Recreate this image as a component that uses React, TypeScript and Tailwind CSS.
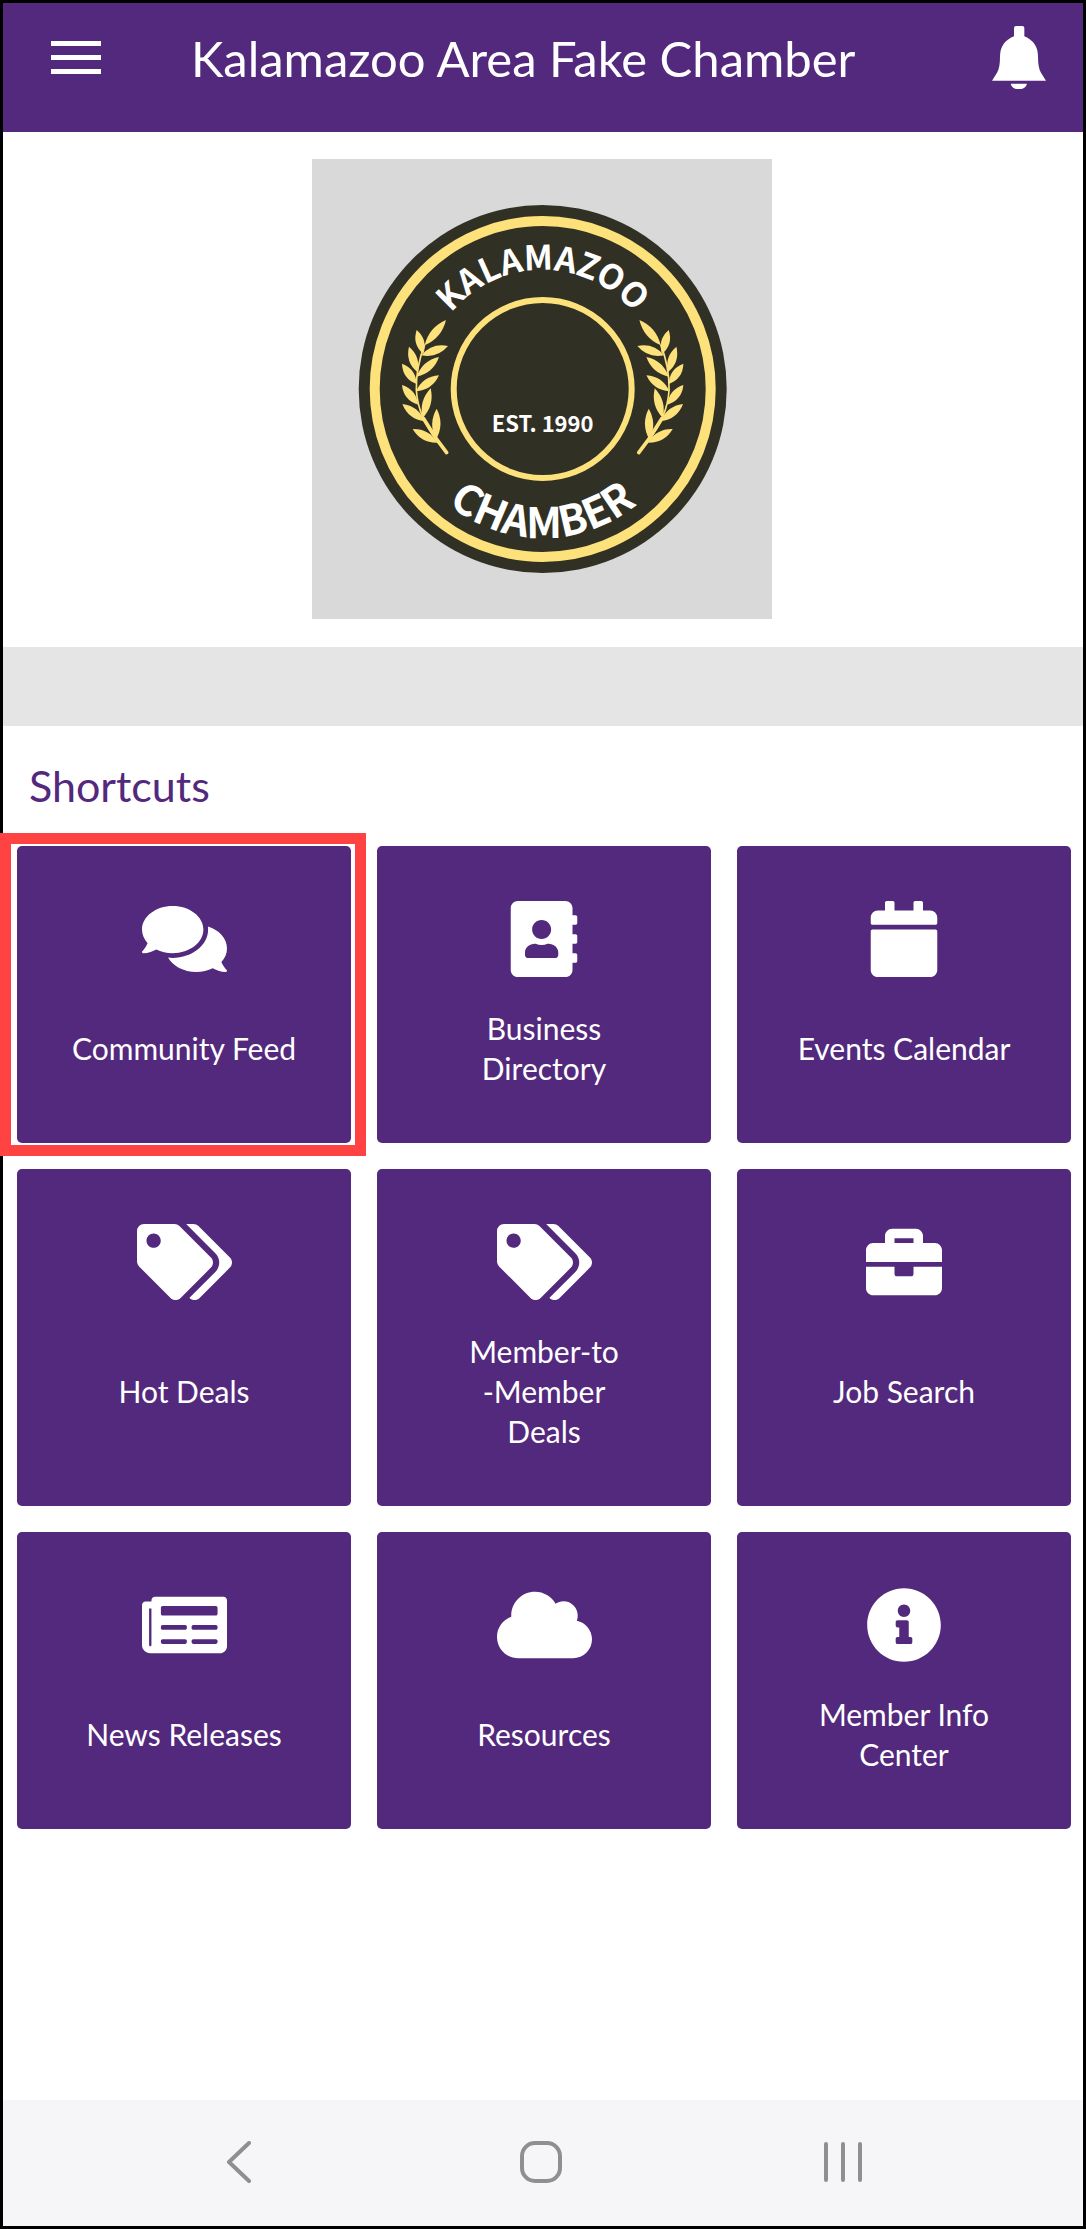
import {
  FaAddressBook,
  FaBriefcase,
  FaCalendar,
  FaCloud,
  FaComments,
  FaInfoCircle,
  FaNewspaper,
  FaTags,
} from "react-icons/fa";
import type { IconType } from "react-icons";

interface Shortcut {
  label: string;
  icon: IconType;
  iconWidth: string;
  highlighted?: boolean;
}

const shortcuts: Shortcut[] = [
  { label: "Community Feed", icon: FaComments, iconWidth: "w-[85px]", highlighted: true },
  { label: "Business\nDirectory", icon: FaAddressBook, iconWidth: "w-[76px]" },
  { label: "Events Calendar", icon: FaCalendar, iconWidth: "w-[76px]" },
  { label: "Hot Deals", icon: FaTags, iconWidth: "w-[95px]" },
  { label: "Member-to\n-Member\nDeals", icon: FaTags, iconWidth: "w-[95px]" },
  { label: "Job Search", icon: FaBriefcase, iconWidth: "w-[76px]" },
  { label: "News Releases", icon: FaNewspaper, iconWidth: "w-[85px]" },
  { label: "Resources", icon: FaCloud, iconWidth: "w-[95px]" },
  { label: "Member Info\nCenter", icon: FaInfoCircle, iconWidth: "w-[76px]" },
];

// [tipX, tipY, baseX, baseY] of every leaf on the laurel branch
const leaves = [
  [168, 30, 104, 106],
  [80, 60, 100, 132],
  [174, 108, 94, 136],
  [57, 110, 82, 186],
  [147, 141, 80, 200],
  [36, 161, 80, 222],
  [147, 196, 78, 244],
  [36, 225, 84, 284],
  [122, 235, 98, 324],
  [37, 282, 104, 334],
  [140, 296, 138, 388],
  [68, 357, 142, 398],
];

function leafPath([tx, ty, bx, by]: number[]) {
  const len = Math.hypot(tx - bx, ty - by);
  const nx = (-(ty - by) / len) * 25;
  const ny = ((tx - bx) / len) * 25;
  const mx = (tx + bx) / 2;
  const my = (ty + by) / 2;
  return `M${bx} ${by}Q${mx + nx} ${my + ny} ${tx} ${ty}Q${mx - nx} ${my - ny} ${bx} ${by}Z`;
}

function Laurel() {
  return (
    <g transform="translate(78 151) scale(0.3333)" fill="#fde17b">
      {leaves.map((leaf) => (
        <path key={leaf.join()} d={leafPath(leaf)} />
      ))}
      <path
        d="M104 104Q78 170 79 240Q84 320 140 390"
        fill="none"
        stroke="#fde17b"
        strokeWidth="5"
      />
      <path
        d="M100 325L138 385L170 428"
        fill="none"
        stroke="#fde17b"
        strokeWidth="11"
        strokeLinecap="round"
        strokeLinejoin="round"
      />
    </g>
  );
}

function ChamberLogo() {
  return (
    <svg
      viewBox="0 0 460 460"
      className="w-[460px] max-w-full bg-[#d9d9d9] font-['Noto_Sans_CJK_JP',sans-serif] font-bold"
      role="img"
      aria-label="Kalamazoo Chamber"
    >
      <defs>
        <path id="arc-top" d="M111.7 230A119 119 0 0 1 349.7 230" />
        <path id="arc-bottom" d="M81.7 230A149 149 0 0 0 379.7 230" />
      </defs>
      <circle cx="230.7" cy="230" r="184" fill="#313025" />
      <circle cx="230.7" cy="230" r="168" fill="none" stroke="#fde17b" strokeWidth="10" />
      <circle cx="230.7" cy="230" r="89" fill="none" stroke="#fde17b" strokeWidth="6" />
      <Laurel />
      <g transform="translate(461.4 0) scale(-1 1)">
        <Laurel />
      </g>
      <text fill="#fff" fontSize="34" textAnchor="middle">
        <textPath href="#arc-top" startOffset="50%">
          KALAMAZOO
        </textPath>
      </text>
      <text fill="#fff" fontSize="42" textAnchor="middle">
        <textPath href="#arc-bottom" startOffset="50%">
          CHAMBER
        </textPath>
      </text>
      <text x="230.7" y="273" fill="#fff" fontSize="22" textAnchor="middle">
        EST. 1990
      </text>
    </svg>
  );
}

function Header() {
  return (
    <header className="flex h-[129px] items-center bg-[#53297d] pr-[37px] pb-5 pl-12 text-white">
      <button type="button" aria-label="Menu" className="flex w-[50px] flex-col gap-[9px]">
        <span className="h-[5px] bg-white"></span>
        <span className="h-[5px] bg-white"></span>
        <span className="h-[5px] bg-white"></span>
      </button>
      <h1 className="ml-[90px] flex-1 text-[49px] leading-[60px]">Kalamazoo Area Fake Chamber</h1>
      <button type="button" aria-label="Notifications">
        <svg viewBox="0 0 162 190" className="w-[54px]" fill="currentColor">
          <path d="M66 6Q66 0 72 0H91Q97 0 97 6V31Q138 48 138 92Q138 126 147 140L162 164H0L15 140Q24 126 24 92Q24 48 66 31Z" />
          <path d="M56 173H105Q100 190 80 190Q61 190 56 173Z" />
        </svg>
      </button>
    </header>
  );
}

function ShortcutCard({ label, icon: Icon, iconWidth, highlighted }: Shortcut) {
  return (
    <button
      type="button"
      className="relative flex cursor-pointer flex-col items-center rounded-[5px] bg-[#53297d] px-4 py-[55px] text-white"
    >
      <Icon className={`h-[76px] ${iconWidth}`} />
      <span className="mt-[31px] flex min-h-20 flex-1 items-center text-center text-[30px] leading-10 whitespace-pre-line">
        {label}
      </span>
      {highlighted && (
        <span className="pointer-events-none absolute -top-[13px] -right-[15px] -bottom-[13px] -left-[17px] border-[11px] border-[#ff4343]"></span>
      )}
    </button>
  );
}

function NavBar() {
  return (
    <nav className="bg-[#f6f6f8] pr-1 text-[#8f8f8f]">
      <div className="mx-auto grid h-[126px] w-[84%] grid-cols-3 place-items-center pb-0.5">
        <button type="button" aria-label="Back">
          <svg viewBox="0 0 42 42" className="w-[42px]" fill="none" stroke="currentColor" strokeWidth="4" strokeLinecap="round" strokeLinejoin="round">
            <path d="M30 2L10 21L30 40" />
          </svg>
        </button>
        <button type="button" aria-label="Home">
          <svg viewBox="0 0 42 42" className="w-[42px]" fill="none" stroke="currentColor" strokeWidth="4">
            <rect x="2" y="2" width="38" height="38" rx="13" />
          </svg>
        </button>
        <button type="button" aria-label="Recent apps">
          <svg viewBox="0 0 42 42" className="w-[42px]" fill="none" stroke="currentColor" strokeWidth="4" strokeLinecap="round">
            <path d="M5 3V39M22 3V39M39 3V39" />
          </svg>
        </button>
      </div>
    </nav>
  );
}

export default function App() {
  return (
    <div className="flex min-h-screen flex-col border-[3px] border-black bg-white font-['Lato',sans-serif]">
      <Header />

      <div className="flex justify-center pt-[27px] pr-0.5 pb-7">
        <ChamberLogo />
      </div>

      {/* Empty banner slot */}
      <div className="h-[79px] bg-[#e5e5e5]"></div>

      <main className="flex-1 pr-3 pl-3.5">
        <h2 className="py-[30px] pl-3 text-[43px] leading-[60px] text-[#53297d]">Shortcuts</h2>
        <div className="grid grid-cols-3 gap-[26px]">
          {shortcuts.map((item) => (
            <ShortcutCard key={item.label} {...item} />
          ))}
        </div>
      </main>

      <NavBar />
    </div>
  );
}
